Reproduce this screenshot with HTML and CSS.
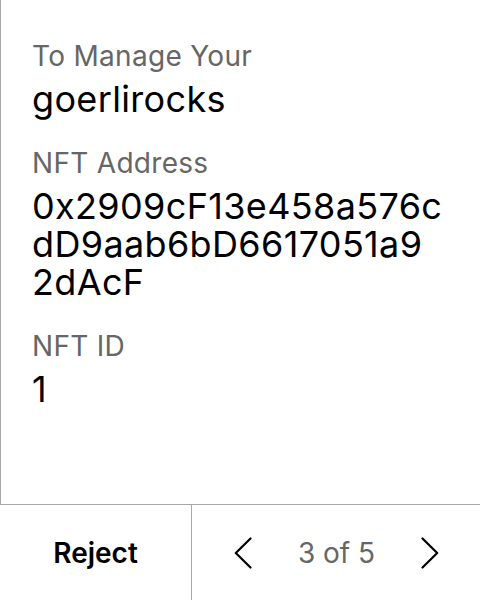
FILE: index.html
```html
<!DOCTYPE html>
<html>
<head>
<meta charset="utf-8">
<link rel="stylesheet" href="styles.css">
</head>
<body>
<div class="screen">
  <main class="details">
    <div class="field">
      <div class="label">To Manage Your</div>
      <div class="value">goerlirocks</div>
    </div>
    <div class="field">
      <div class="label">NFT Address</div>
      <div class="value address"><span class="line">0x2909cF13e458a576c</span><span class="line">dD9aab6bD6617051a9</span><span class="line">2dAcF</span></div>
    </div>
    <div class="field">
      <div class="label">NFT ID</div>
      <div class="value">1</div>
    </div>
  </main>
  <footer class="actions">
    <button class="reject">Reject</button>
    <div class="pager">
      <span class="chev">
        <svg width="18" height="32" viewBox="0 0 18 32"><path d="M16.5 1.5 L1.8 16 L16.5 30.5" fill="none" stroke="#000" stroke-width="2.2" stroke-linecap="round" stroke-linejoin="round"/></svg>
      </span>
      <span class="count">3 of 5</span>
      <span class="chev">
        <svg width="18" height="32" viewBox="0 0 18 32"><path d="M1.5 1.5 L16.2 16 L1.5 30.5" fill="none" stroke="#000" stroke-width="2.2" stroke-linecap="round" stroke-linejoin="round"/></svg>
      </span>
    </div>
  </footer>
</div>
</body>
</html>
```

FILE: styles.css
```css
html, body {
  margin: 0;
  padding: 0;
  background: #fff;
}
body {
  font-family: Inter, "Noto Sans", sans-serif;
  color: #000;
}
.screen {
  width: 480px;
  height: 600px;
  display: flex;
  flex-direction: column;
}
.details {
  flex: 1;
  border-left: 1px solid #a8a8a8;
  border-bottom: 1px solid #a8a8a8;
  padding: 39px 20px 0 31px;
  display: flex;
  flex-direction: column;
  gap: 28px;
}
.field {
  display: flex;
  flex-direction: column;
  gap: 7px;
}
.label {
  font-size: 28px;
  line-height: 34px;
  color: #666;
  letter-spacing: 0.3px;
}
.value {
  font-size: 36px;
  line-height: 38px;
  color: #000;
  letter-spacing: 0.35px;
}
.address .line {
  display: block;
}
.actions {
  height: 95px;
  flex: none;
  display: flex;
}
.reject {
  width: 192px;
  border: none;
  border-right: 1px solid #a8a8a8;
  background: #fff;
  font-family: inherit;
  font-size: 28px;
  font-weight: 600;
  color: #000;
  padding: 0;
}
.pager {
  flex: 1;
  display: flex;
  align-items: center;
  justify-content: space-between;
  padding: 0 41px 0 42px;
}
.chev {
  display: flex;
}
.count {
  font-size: 28px;
  color: #666;
}
```
